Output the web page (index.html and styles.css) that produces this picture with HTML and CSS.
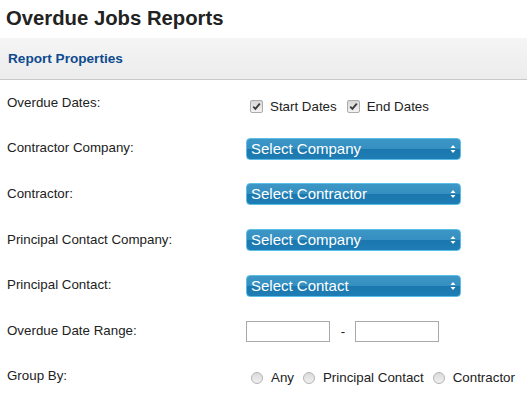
FILE: index.html
```html
<!DOCTYPE html>
<html>
<head>
<meta charset="utf-8">
<link rel="stylesheet" href="styles.css">
</head>
<body>
<svg class="defs" width="0" height="0" aria-hidden="true">
  <defs>
    <linearGradient id="cbg" x1="0" y1="0" x2="0" y2="1">
      <stop offset="0" stop-color="#d6d6d6"/>
      <stop offset="1" stop-color="#f4f4f4"/>
    </linearGradient>
    <linearGradient id="rbg" x1="0" y1="0" x2="0" y2="1">
      <stop offset="0" stop-color="#d9d9d9"/>
      <stop offset="1" stop-color="#f2f2f2"/>
    </linearGradient>
  </defs>
</svg>
<h1 class="title">Overdue Jobs Reports</h1>
<div class="panel-head"><span class="panel-title">Report Properties</span></div>
<div class="form">
  <div class="row">
    <div class="label">Overdue Dates:</div>
    <div class="ctl checks">
      <label class="opt"><svg class="cb" width="13" height="13" viewBox="0 0 13 13"><rect x="0.5" y="0.5" width="12" height="12" rx="1.5" fill="url(#cbg)" stroke="#acacac"/><path d="M3.2 6.6 L5.4 8.8 L9.8 3.6" fill="none" stroke="#3a3a3a" stroke-width="1.8"/></svg><span>Start Dates</span></label>
      <label class="opt"><svg class="cb" width="13" height="13" viewBox="0 0 13 13"><rect x="0.5" y="0.5" width="12" height="12" rx="1.5" fill="url(#cbg)" stroke="#acacac"/><path d="M3.2 6.6 L5.4 8.8 L9.8 3.6" fill="none" stroke="#3a3a3a" stroke-width="1.8"/></svg><span>End Dates</span></label>
    </div>
  </div>
  <div class="row">
    <div class="label">Contractor Company:</div>
    <div class="ctl"><span class="sel"><select><option>Select Company</option></select><svg class="arr" width="6" height="10" viewBox="0 0 6 10"><path d="M0.5 4 L3 1 L5.5 4 Z M0.5 6 L3 9 L5.5 6 Z" fill="#fff"/></svg></span></div>
  </div>
  <div class="row">
    <div class="label">Contractor:</div>
    <div class="ctl"><span class="sel"><select><option>Select Contractor</option></select><svg class="arr" width="6" height="10" viewBox="0 0 6 10"><path d="M0.5 4 L3 1 L5.5 4 Z M0.5 6 L3 9 L5.5 6 Z" fill="#fff"/></svg></span></div>
  </div>
  <div class="row">
    <div class="label">Principal Contact Company:</div>
    <div class="ctl"><span class="sel"><select><option>Select Company</option></select><svg class="arr" width="6" height="10" viewBox="0 0 6 10"><path d="M0.5 4 L3 1 L5.5 4 Z M0.5 6 L3 9 L5.5 6 Z" fill="#fff"/></svg></span></div>
  </div>
  <div class="row">
    <div class="label">Principal Contact:</div>
    <div class="ctl"><span class="sel"><select><option>Select Contact</option></select><svg class="arr" width="6" height="10" viewBox="0 0 6 10"><path d="M0.5 4 L3 1 L5.5 4 Z M0.5 6 L3 9 L5.5 6 Z" fill="#fff"/></svg></span></div>
  </div>
  <div class="row">
    <div class="label">Overdue Date Range:</div>
    <div class="ctl range"><input class="txt" type="text"><span class="dash">-</span><input class="txt" type="text"></div>
  </div>
  <div class="row">
    <div class="label">Group By:</div>
    <div class="ctl radios">
      <label class="ropt"><svg class="rb" width="12" height="12" viewBox="0 0 12 12"><circle cx="6" cy="6" r="5.5" fill="url(#rbg)" stroke="#b4b4b4"/></svg><span>Any</span></label>
      <label class="ropt"><svg class="rb" width="12" height="12" viewBox="0 0 12 12"><circle cx="6" cy="6" r="5.5" fill="url(#rbg)" stroke="#b4b4b4"/></svg><span>Principal Contact</span></label>
      <label class="ropt"><svg class="rb" width="12" height="12" viewBox="0 0 12 12"><circle cx="6" cy="6" r="5.5" fill="url(#rbg)" stroke="#b4b4b4"/></svg><span>Contractor</span></label>
    </div>
  </div>
</div>
</body>
</html>
```
FILE: styles.css
```css
html, body {
  margin: 0;
  padding: 0;
  background: #fff;
}
body {
  font-family: "Liberation Sans", Arial, sans-serif;
  color: #222;
}
.defs {
  position: absolute;
  width: 0;
  height: 0;
}
.title {
  margin: 6px 0 8px;
  padding: 0 0 0 6px;
  font-size: 20.3px;
  line-height: 24px;
  font-weight: bold;
  color: #222;
}
.panel-head {
  height: 41px;
  display: flex;
  align-items: center;
  padding-left: 8px;
  background: linear-gradient(#f5f5f5, #ececec);
  border-bottom: 1px solid #c8c8c8;
}
.panel-title {
  font-size: 13.6px;
  font-weight: bold;
  color: #0e4a8e;
  line-height: 16px;
}
.form {
  padding-left: 7px;
}
.row {
  height: 45.6px;
  display: grid;
  grid-template-columns: 239px 1fr;
  align-items: center;
}
.label {
  font-size: 13.33px;
  line-height: 16px;
  color: #222;
}
.ctl {
  display: flex;
  align-items: center;
}
.checks {
  margin-top: 9px;
  font-size: 13.33px;
  line-height: 16px;
  padding-left: 4px;
}
.opt {
  display: inline-flex;
  align-items: baseline;
  margin-right: 10px;
}
.opt .cb {
  align-self: flex-end;
  margin-bottom: 2px;
  margin-right: 7px;
}
.opt:last-child {
  margin-right: 0;
}
.sel {
  position: relative;
  display: inline-block;
  width: 215px;
  height: 22px;
  margin-top: 1px;
}
.sel select {
  appearance: none;
  -webkit-appearance: none;
  display: block;
  width: 215px;
  height: 22px;
  margin: 0;
  padding: 0 0 0 4px;
  border: 1px solid #5cbde6;
  border-radius: 4px;
  background: linear-gradient(#3c96c6 0%, #3590c1 48%, #1b78af 52%, #1e7db4 100%);
  color: #fff;
  font-family: "Liberation Sans", Arial, sans-serif;
  font-size: 15px;
  line-height: 20px;
  outline: none;
}
.sel .arr {
  position: absolute;
  right: 5px;
  top: 6px;
  pointer-events: none;
}
.range {
  margin-top: 2px;
}
.txt {
  width: 84px;
  height: 21px;
  box-sizing: border-box;
  margin: 0;
  padding: 0 2px;
  border: 1px solid #a9a9a9;
  background: #fff;
  font-family: "Liberation Sans", Arial, sans-serif;
  font-size: 13.33px;
}
.dash {
  font-size: 13.33px;
  line-height: 16px;
  width: 25px;
  text-align: center;
  padding-left: 1px;
  box-sizing: border-box;
}
.radios {
  margin-top: 3px;
  font-size: 13.33px;
  line-height: 16px;
  padding-left: 5px;
}
.ropt {
  display: inline-flex;
  align-items: baseline;
  margin-right: 9px;
}
.ropt:last-child {
  margin-right: 0;
}
.ropt .rb {
  align-self: flex-end;
  margin-bottom: 2px;
  margin-right: 8px;
}
```
